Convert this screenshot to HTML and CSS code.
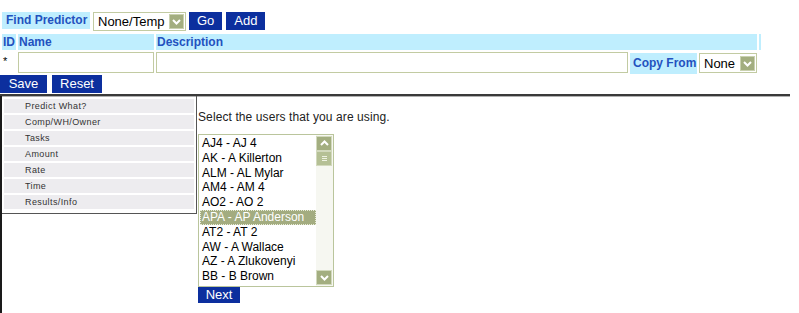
FILE: index.html
```html
<!DOCTYPE html>
<html lang="en">
<head>
    <meta charset="UTF-8">
    <title>Predictor</title>
    <link rel="stylesheet" href="styles.css">
</head>
<body>
    <div class="find-row">
        <span class="label label-find">Find Predictor</span>
        <span class="select sel-find">
            <span class="sel-text">None/Temp</span>
            <span class="sel-arrow"><svg width="13" height="13" viewBox="0 0 13 13"><path d="M3 5 L6.5 8.5 L10 5" fill="none" stroke="#fff" stroke-width="2"/></svg></span>
        </span>
        <button class="btn">Go</button>
        <button class="btn">Add</button>
    </div>

    <table class="form">
        <tr class="head">
            <td class="c-id">ID</td>
            <td class="c-name">Name</td>
            <td class="c-desc">Description</td>
            <td class="c-end"></td>
        </tr>
        <tr>
            <td class="star">*</td>
            <td><input type="text" class="input in-name"></td>
            <td>
                <div class="desc-row">
                    <input type="text" class="input in-desc">
                    <span class="label label-tall">Copy From</span>
                    <span class="select sel-copy">
                        <span class="sel-text">None</span>
                        <span class="sel-arrow"><svg width="13" height="13" viewBox="0 0 13 13"><path d="M3 5 L6.5 8.5 L10 5" fill="none" stroke="#fff" stroke-width="2"/></svg></span>
                    </span>
                </div>
            </td>
            <td></td>
        </tr>
    </table>

    <div class="save-row">
        <button class="btn btn-save">Save</button>
        <button class="btn btn-reset">Reset</button>
    </div>

    <div class="divider"></div>

    <div class="main">
        <div class="menu">
            <div class="menu-item">Predict What?</div>
            <div class="menu-item">Comp/WH/Owner</div>
            <div class="menu-item">Tasks</div>
            <div class="menu-item">Amount</div>
            <div class="menu-item">Rate</div>
            <div class="menu-item">Time</div>
            <div class="menu-item">Results/Info</div>
        </div>

        <div class="content">
            <p class="prompt">Select the users that you are using.</p>
            <div class="listbox">
                <div class="options">
                    <div class="opt">AJ4 - AJ 4</div>
                    <div class="opt">AK - A Killerton</div>
                    <div class="opt">ALM - AL Mylar</div>
                    <div class="opt">AM4 - AM 4</div>
                    <div class="opt">AO2 - AO 2</div>
                    <div class="opt selected">APA - AP Anderson</div>
                    <div class="opt">AT2 - AT 2</div>
                    <div class="opt">AW - A Wallace</div>
                    <div class="opt">AZ - A Zlukovenyi</div>
                    <div class="opt">BB - B Brown</div>
                </div>
                <div class="scrollbar">
                    <span class="sb-btn"><svg width="13" height="13" viewBox="0 0 13 13"><path d="M3 8 L6.5 4.5 L10 8" fill="none" stroke="#fff" stroke-width="2"/></svg></span>
                    <span class="sb-thumb"><svg width="13" height="13" viewBox="0 0 13 13"><path d="M4 4.5 H9 M4 6.5 H9 M4 8.5 H9" stroke="#eef2e2" stroke-width="1"/></svg></span>
                    <span class="sb-track"></span>
                    <span class="sb-btn"><svg width="13" height="13" viewBox="0 0 13 13"><path d="M3 5 L6.5 8.5 L10 5" fill="none" stroke="#fff" stroke-width="2"/></svg></span>
                </div>
            </div>
            <button class="btn btn-next">Next</button>
        </div>
    </div>
</body>
</html>
```

FILE: styles.css
```css
* {
    box-sizing: border-box;
}

body {
    margin: 0;
    font-family: 'Liberation Sans', Arial, sans-serif;
    background: #fff;
    color: #000;
    height: 313px;
    overflow: hidden;
}

.find-row {
    display: flex;
    align-items: flex-start;
    gap: 3px;
    padding: 12px 0 0 2px;
    height: 32px;
}

.label {
    display: inline-block;
    background: #bfeefe;
    color: #2352bf;
    font-weight: bold;
    font-size: 12px;
    height: 17px;
    line-height: 17px;
    padding: 0 2px 0 4px;
    white-space: nowrap;
}

.label-find {
    width: 88px;
}

.label-tall {
    width: 67px;
    height: 21px;
    line-height: 21px;
    margin-top: 1px;
    padding: 0 0 0 3px;
}

.select {
    display: inline-flex;
    align-items: center;
    justify-content: space-between;
    border: 1px solid #c2cba2;
    background: #fff;
    height: 19px;
    padding: 0 1px 0 4px;
    font-size: 13px;
}

.sel-find {
    width: 93px;
}

.sel-copy {
    width: 58px;
    margin-top: 1px;
    height: 20px;
}

.sel-arrow {
    display: inline-flex;
    width: 15px;
    height: 15px;
    align-items: center;
    justify-content: center;
    background: #a3ae80;
    border: 1px solid #c9d1b0;
}

.btn {
    background: #0c2f9e;
    color: #fff;
    border: none;
    font-family: 'Liberation Sans', Arial, sans-serif;
    font-size: 13px;
    height: 18px;
    line-height: 18px;
    padding: 0 8px;
    margin: 0;
    cursor: pointer;
}

.find-row .btn + .btn {
    margin-left: 1px;
}

.form {
    border-spacing: 2px;
    border-collapse: separate;
    margin: 0;
}

.form td {
    padding: 0;
    vertical-align: top;
}

.head td {
    background: #bfeefe;
    color: #2352bf;
    font-weight: bold;
    font-size: 12px;
    height: 16px;
    line-height: 16px;
    padding-left: 1px;
}

.c-id {
    width: 14px;
}

.c-name {
    width: 136px;
}

.c-desc {
    width: 601px;
}

.c-end {
    width: 2px;
}

.star {
    font-size: 11px;
    line-height: 18px;
    padding-left: 1px !important;
}

.input {
    display: block;
    height: 21px;
    border: 1px solid #c2cba2;
    background: #fff;
    margin: 0;
    padding: 0 3px;
    font-size: 13px;
}

.in-name {
    width: 136px;
}

.desc-row {
    display: flex;
    gap: 2px;
    align-items: flex-start;
}

.in-desc {
    width: 472px;
}

.save-row {
    display: flex;
    gap: 5px;
    margin-top: -1px;
}

.btn-save {
    width: 47px;
    padding: 0;
}

.btn-reset {
    width: 50px;
    padding: 0;
}

.divider {
    margin-top: 1px;
    width: 790px;
    border-top: 2px solid #3a3a3a;
    border-bottom: 1px solid #b0b0b0;
}

.main {
    display: flex;
    align-items: flex-start;
    border-left: 2px solid #1a1a1a;
    height: 230px;
    margin-top: -1px;
}

.menu {
    width: 195px;
    border-right: 1px solid #555;
    border-bottom: 1px solid #555;
    padding: 3px 2px 2px 2px;
}

.menu-item {
    background: #edecef;
    height: 14px;
    line-height: 14px;
    margin-bottom: 2px;
    padding-left: 21px;
    font-size: 9px;
    letter-spacing: 0.4px;
    color: #333;
}

.content {
    padding-left: 1px;
}

.prompt {
    margin: 14px 0 10px 0;
    font-size: 12px;
    color: #222;
    letter-spacing: 0.1px;
}

.listbox {
    display: flex;
    width: 136px;
    height: 153px;
    border: 1px solid #bac59c;
    background: #fff;
}

.options {
    flex: 1;
    padding: 1px 0 0 1px;
    overflow: hidden;
}

.opt {
    font-size: 12px;
    height: 14.8px;
    line-height: 14.8px;
    padding-left: 2px;
    white-space: nowrap;
}

.opt.selected {
    background: #a3ac80;
    color: #fff;
    outline: 1px dotted #e8ecd8;
    outline-offset: -1px;
}

.scrollbar {
    width: 17px;
    display: flex;
    flex-direction: column;
    padding: 1px 1px 1px 0;
    background: #f6f7f1;
}

.sb-btn,
.sb-thumb {
    display: flex;
    align-items: center;
    justify-content: center;
    height: 15px;
    background: #a3ae80;
    border: 1px solid #d2d9bd;
}

.sb-thumb {
    background: #b5c095;
}

.sb-track {
    flex: 1;
}

.btn-next {
    display: block;
    width: 42px;
    height: 16px;
    line-height: 16px;
    padding: 0;
}
```
